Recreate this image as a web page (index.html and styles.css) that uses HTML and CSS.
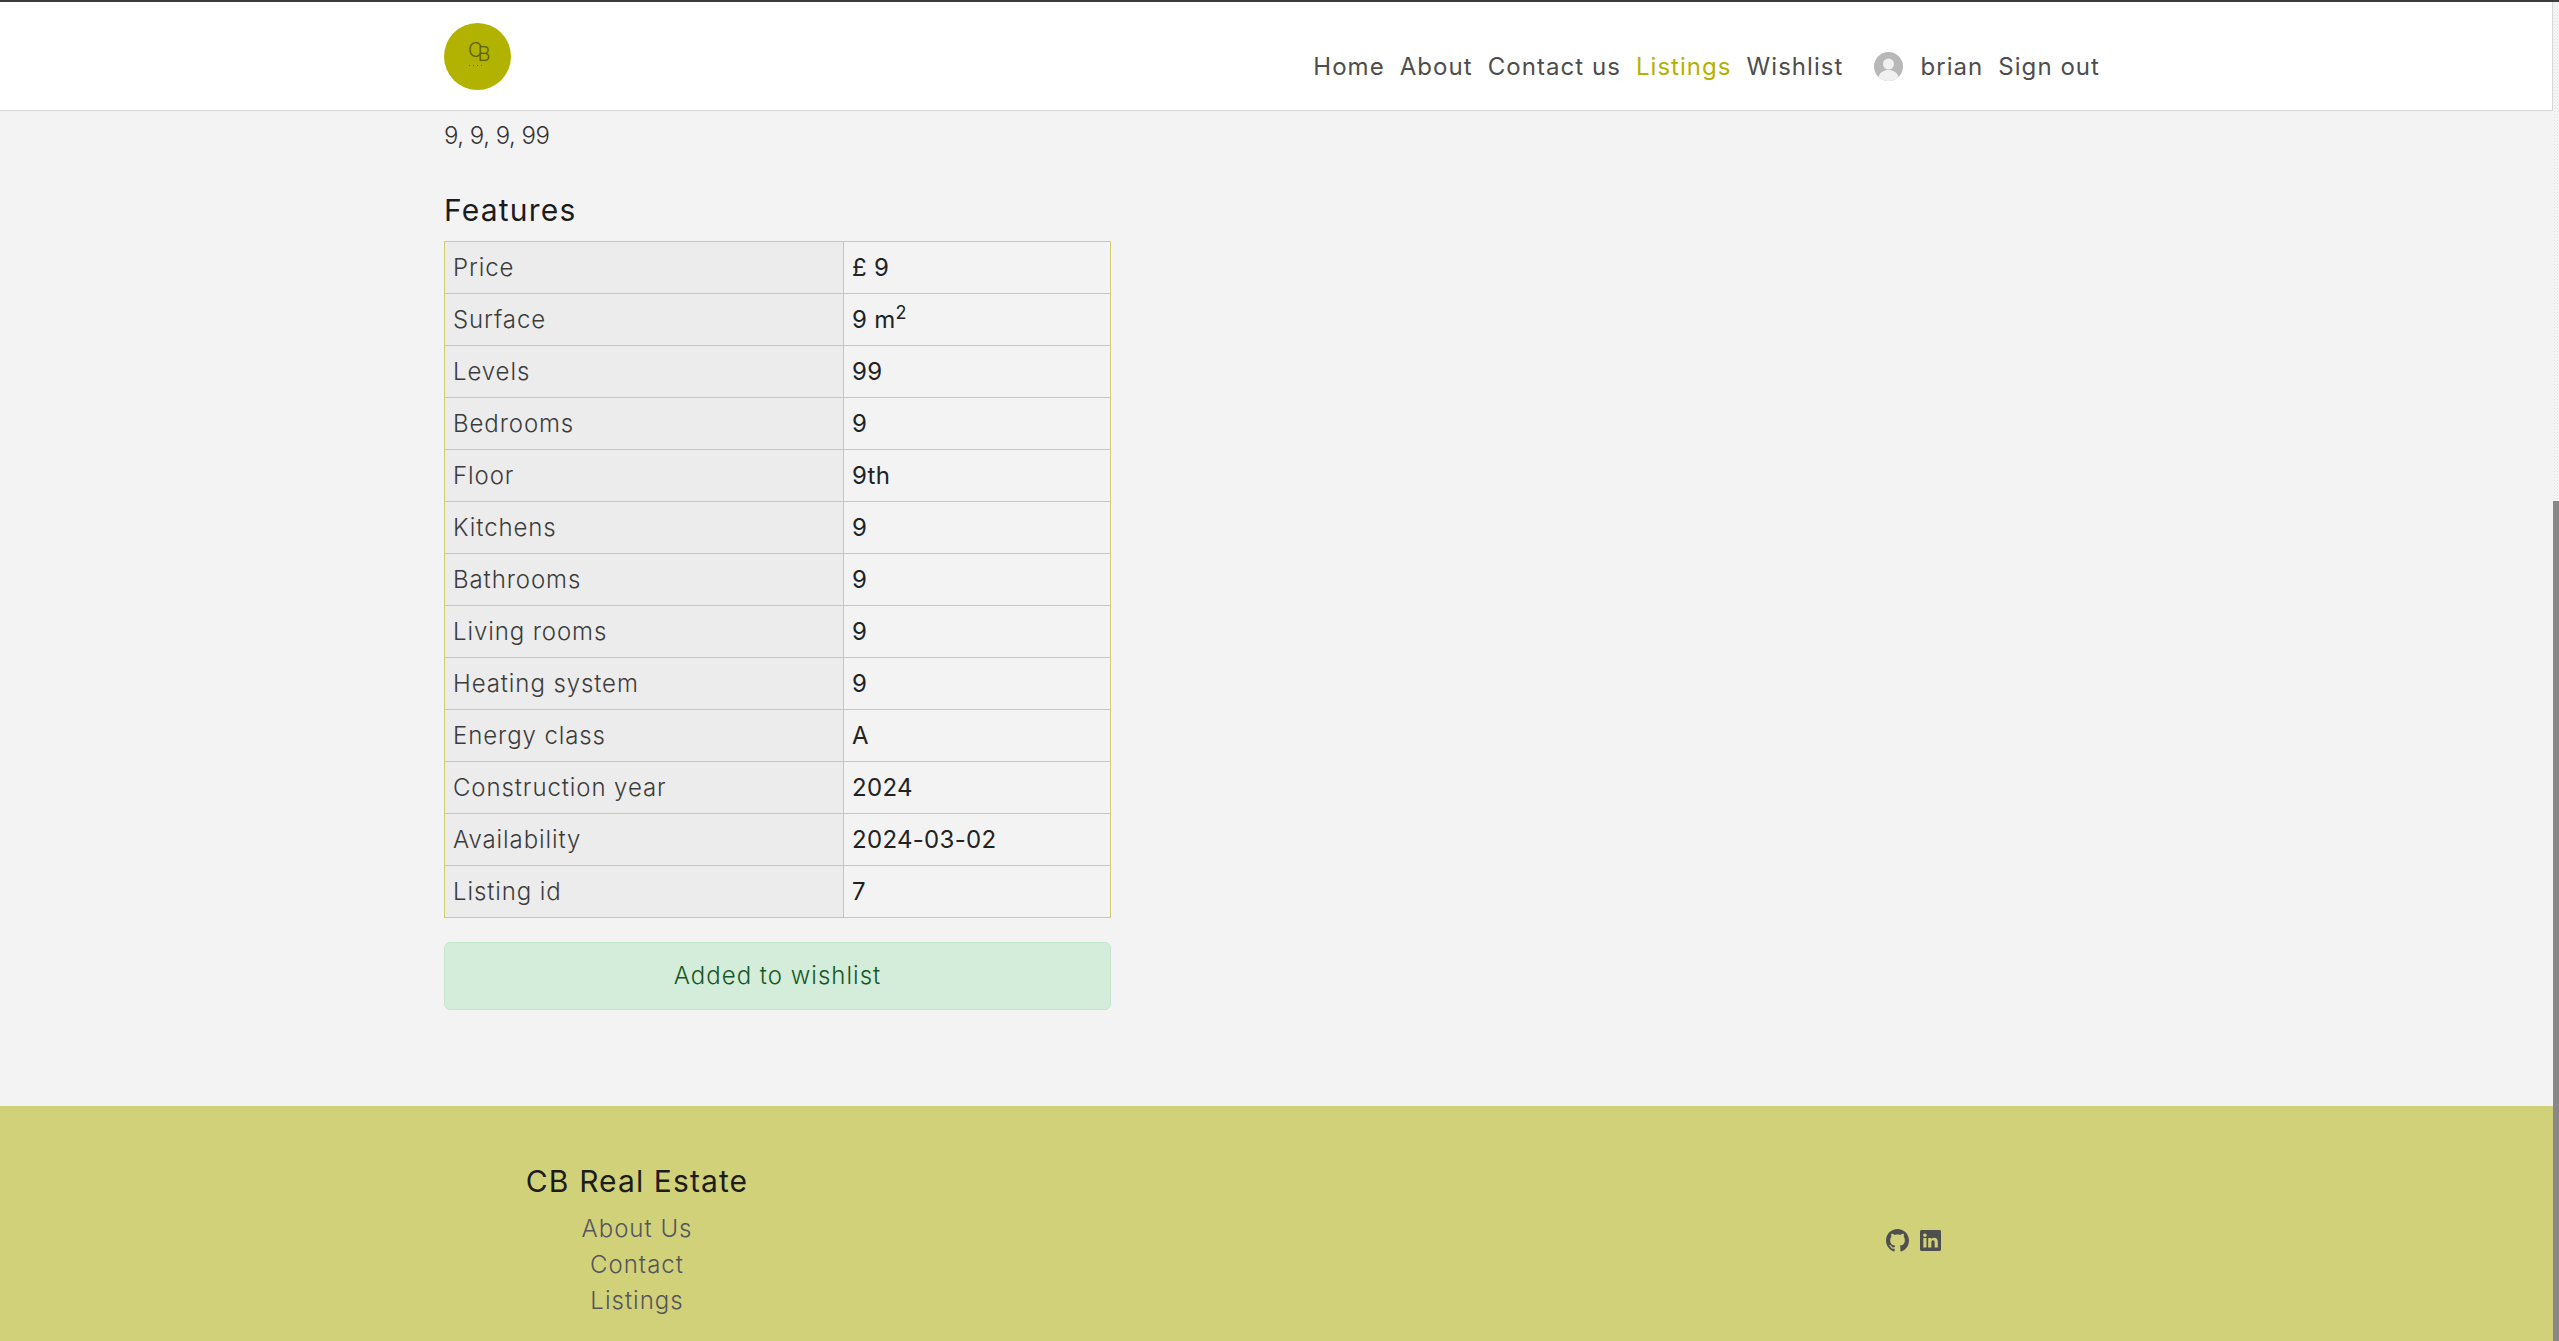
FILE: index.html
```html
<!DOCTYPE html>
<html lang="en">
<head>
<meta charset="UTF-8">
<meta name="viewport" content="width=device-width, initial-scale=1.0">
<title>CB Real Estate</title>
<link rel="stylesheet" href="styles.css">
</head>
<body>
<div class="page">
  <header class="navbar">
    <div class="container nav-inner">
      <a class="logo" href="#">
        <svg viewBox="0 0 67 67" width="67" height="67">
          <circle cx="33.5" cy="33.5" r="33.5" fill="#b2b200"/>
          <text class="logo-text" x="24" y="34">C<tspan dx="-5" dy="4">B</tspan></text>
          <line x1="25" y1="42.500" x2="40" y2="42.500" stroke="#7a7a00" stroke-width="1" stroke-dasharray="1 3"/>
        </svg>
      </a>
      <nav class="nav-links">
        <a href="#">Home</a>
        <a href="#">About</a>
        <a href="#">Contact us</a>
        <a href="#" class="active">Listings</a>
        <a href="#">Wishlist</a>
        <span class="user">
          <svg class="avatar" viewBox="0 0 29 29" width="29" height="29">
            <circle cx="14.5" cy="14.5" r="14.5" fill="#b8b8b8"/>
            <circle cx="14.5" cy="12" r="5.5" fill="#f0f0f0"/>
            <path d="M4.5 25c1.5-5 5.5-7 10-7s8.500 2 10 7a14.500 14.500 0 0 1-20 0z" fill="#f0f0f0"/>
          </svg>
          <a href="#">brian</a>
        </span>
        <a href="#">Sign out</a>
      </nav>
    </div>
  </header>

  <main class="container content">
    <p class="rooms">9, 9, 9, 99</p>
    <h2 class="section-title">Features</h2>
    <table class="features">
      <tr><th>Price</th><td>£ 9</td></tr>
      <tr><th>Surface</th><td>9 m<sup>2</sup></td></tr>
      <tr><th>Levels</th><td>99</td></tr>
      <tr><th>Bedrooms</th><td>9</td></tr>
      <tr><th>Floor</th><td>9th</td></tr>
      <tr><th>Kitchens</th><td>9</td></tr>
      <tr><th>Bathrooms</th><td>9</td></tr>
      <tr><th>Living rooms</th><td>9</td></tr>
      <tr><th>Heating system</th><td>9</td></tr>
      <tr><th>Energy class</th><td>A</td></tr>
      <tr><th>Construction year</th><td>2024</td></tr>
      <tr><th>Availability</th><td>2024-03-02</td></tr>
      <tr><th>Listing id</th><td>7</td></tr>
    </table>
    <div class="alert-added">Added to wishlist</div>
  </main>

  <footer class="footer">
    <div class="container footer-inner">
      <div class="footer-links">
        <h3>CB Real Estate</h3>
        <a href="#">About Us</a>
        <a href="#">Contact</a>
        <a href="#">Listings</a>
      </div>
      <div class="footer-icons">
        <svg viewBox="0 0 16 16" width="23" height="23" fill="#4f4f4f">
          <path d="M8 0C3.58 0 0 3.58 0 8c0 3.54 2.29 6.530 5.470 7.590.4.07.55-.17.55-.38 0-.19-.01-.82-.01-1.490-2.010.37-2.530-.49-2.690-.94-.09-.23-.48-.94-.82-1.130-.28-.15-.68-.52-.01-.53.63-.01 1.080.58 1.230.82.72 1.210 1.870.87 2.330.66.07-.52.28-.87.51-1.070-1.780-.2-3.640-.89-3.640-3.950 0-.87.31-1.590.82-2.150-.08-.2-.36-1.020.08-2.120 0 0 .67-.21 2.200.82.64-.18 1.320-.27 2-.27s1.360.09 2 .27c1.530-1.040 2.200-.82 2.200-.82.44 1.100.16 1.920.08 2.120.51.56.82 1.270.82 2.150 0 3.070-1.870 3.750-3.650 3.950.29.25.54.73.54 1.480 0 1.070-.01 1.930-.01 2.200 0 .21.15.46.55.38A8.010 8.010 0 0 0 16 8c0-4.420-3.580-8-8-8z"/>
        </svg>
        <svg viewBox="0 0 16 16" width="21" height="21" fill="#4f4f4f">
          <path d="M0 1.146C0 .513.526 0 1.175 0h13.650C15.474 0 16 .513 16 1.146v13.708c0 .633-.526 1.146-1.175 1.146H1.175C.526 16 0 15.487 0 14.854zm4.943 12.248V6.169H2.542v7.225zm-1.200-8.212c.837 0 1.358-.554 1.358-1.248-.015-.709-.52-1.248-1.342-1.248S2.400 3.226 2.400 3.934c0 .694.521 1.248 1.327 1.248zm4.908 8.212V9.359c0-.216.016-.432.08-.586.173-.431.568-.878 1.232-.878.869 0 1.216.662 1.216 1.634v3.865h2.401V9.250c0-2.220-1.184-3.252-2.764-3.252-1.274 0-1.845.7-2.165 1.193v.025h-.016l.016-.025V6.169h-2.400c.03.678 0 7.225 0 7.225z"/>
        </svg>
      </div>
    </div>
  </footer>
</div>
<div class="scrollbar"><div class="scroll-thumb"></div></div>
</body>
</html>
```

FILE: styles.css
```css
* {
  box-sizing: border-box;
}

html, body {
  height: 100%;
}

body {
  margin: 0;
  display: flex;
  overflow: hidden;
  border-top: 2px solid #3c3c3c;
  background-color: #f3f3f3;
  font-family: Inter, "Open Sans", sans-serif;
  font-size: 24px;
  line-height: 36px;
  letter-spacing: 0.4px;
  color: #222;
}

a {
  color: inherit;
  text-decoration: none;
}

.page {
  flex: 1;
  min-width: 0;
  display: flex;
  flex-direction: column;
}

.container {
  width: 1664px;
  margin-left: 444px;
}

/* top bar */
.navbar {
  height: 109px;
  flex-shrink: 0;
  background: #fff;
  border-bottom: 1px solid #d8d8d8;
  border-right: 1px solid #d8d8d8;
}

.nav-inner {
  display: flex;
  justify-content: space-between;
  padding: 21px 8px 0 0;
}

.logo {
  display: block;
  height: 67px;
}

.logo svg {
  display: block;
}

.logo-text {
  font-size: 20px;
  font-weight: 300;
  letter-spacing: 0;
  fill: #5f5f00;
}

.nav-links {
  display: flex;
  align-items: center;
  gap: 15px;
  height: 87px;
  color: #4d4d4d;
  font-weight: 400;
  letter-spacing: 1.05px;
}

.nav-links .active {
  color: #b2b200;
}

.user {
  display: flex;
  align-items: center;
  gap: 17px;
  margin-left: 16px;
}

.avatar {
  display: block;
}

/* listing details */
.content {
  flex-shrink: 0;
  height: 995px;
  padding-top: 7px;
}

.rooms {
  margin: 0;
  font-weight: 300;
  letter-spacing: -0.5px;
  color: #333;
}

.section-title {
  margin: 38px 0 13px;
  font-size: 30px;
  line-height: 36px;
  font-weight: 400;
  letter-spacing: 1.2px;
  color: #1c1c1c;
}

.features {
  width: 667px;
  table-layout: fixed;
  border-collapse: collapse;
}

.features tr {
  height: 52px;
}

.features th, .features td {
  padding: 0 8px;
  border: 1px solid #cfcf72;
  text-align: left;
}

.features th {
  width: 399px;
  background: #ececec;
  font-weight: 300;
  letter-spacing: 0.9px;
  color: #3c3c3c;
}

.features td {
  font-weight: 400;
  letter-spacing: 0.3px;
  color: #222;
}

.features sup {
  font-size: 18px;
  line-height: 0;
}

.alert-added {
  width: 667px;
  height: 68px;
  margin-top: 24px;
  display: flex;
  align-items: center;
  justify-content: center;
  background: #d4edda;
  border: 1px solid #c3e6cb;
  border-radius: 6px;
  font-weight: 300;
  letter-spacing: 1px;
  color: #155724;
}

/* footer */
.footer {
  flex: 1;
  background: #d1d17a;
}

.footer-inner {
  display: grid;
  grid-template-columns: 386px 1056px auto;
  padding-top: 57px;
}

.footer-links {
  display: flex;
  flex-direction: column;
  align-items: center;
  color: #55555a;
  font-weight: 300;
  letter-spacing: 1px;
}

.footer-links h3 {
  margin: 0 0 12px;
  font-size: 30px;
  line-height: 36px;
  font-weight: 400;
  letter-spacing: 1.1px;
  color: #1c1c1c;
}

.footer-icons {
  grid-column: 3;
  display: flex;
  align-items: center;
  gap: 11px;
  height: 60px;
  margin-top: 47px;
}

/* page scrollbar */
.scrollbar {
  width: 6px;
  flex-shrink: 0;
  padding-top: 499px;
  background: radial-gradient(#e2e2e2 1px, #f4f4f4 1px) 0 0 / 3px 3px;
}

.scroll-thumb {
  height: 100%;
  background: #888;
}
```
